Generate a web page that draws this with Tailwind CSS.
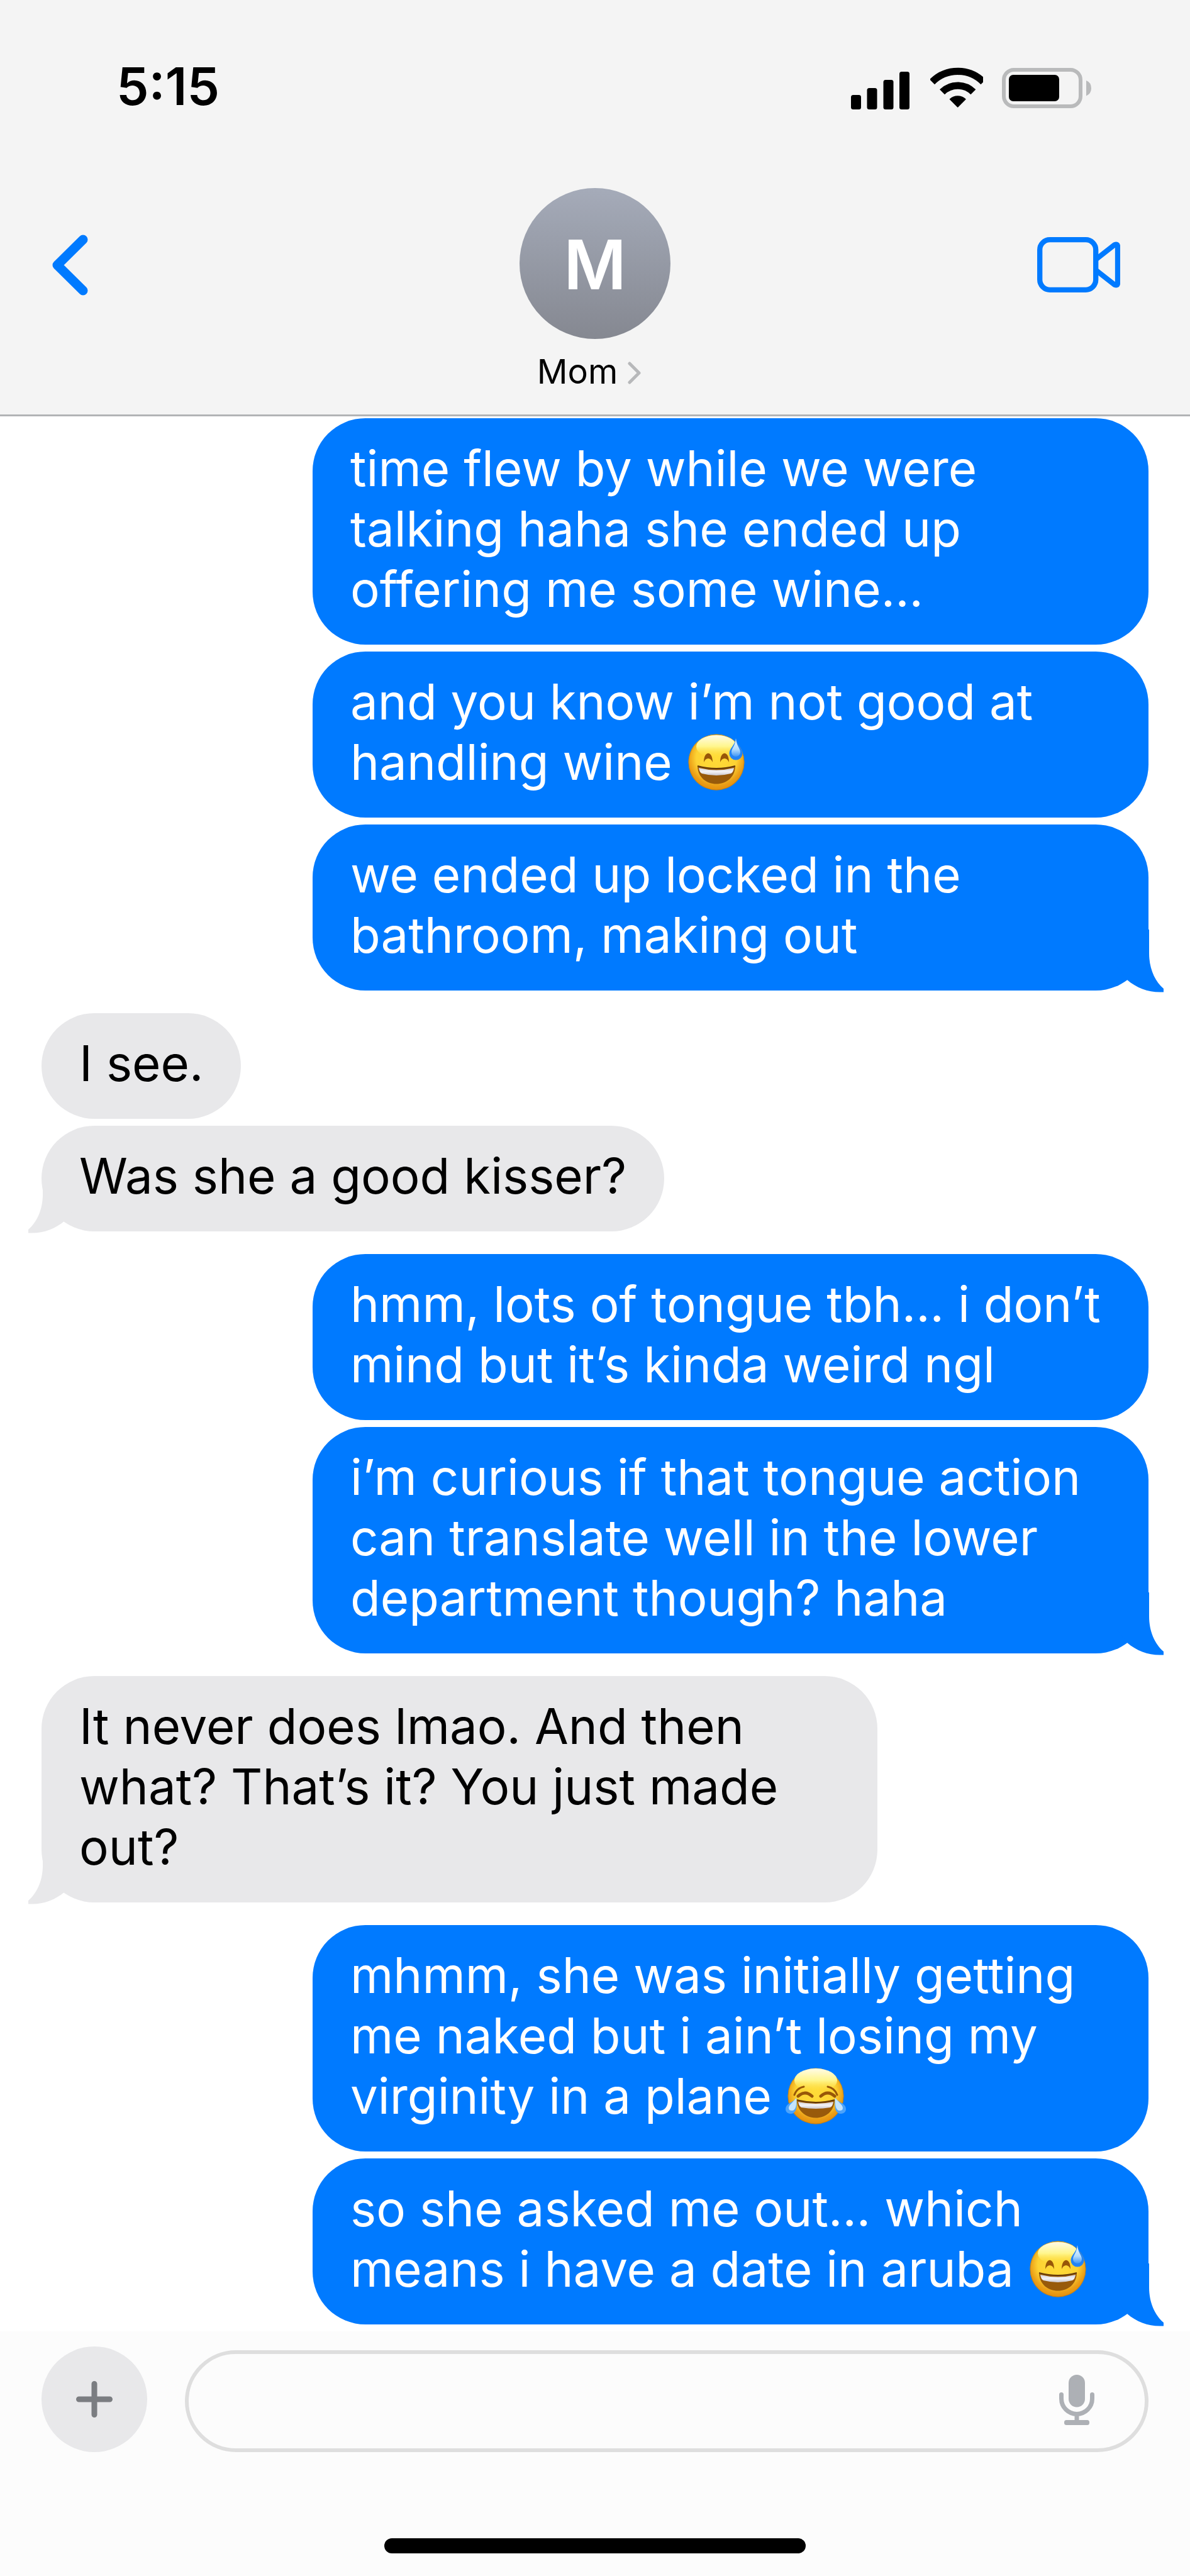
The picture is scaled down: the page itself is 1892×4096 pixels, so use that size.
<!DOCTYPE html>
<html lang="en">
<head>
  <meta charset="UTF-8" />
  <meta name="viewport" content="width=device-width, initial-scale=1.0" />
  <title>Messages</title>
  <script src="https://cdn.jsdelivr.net/npm/@tailwindcss/browser@4"></script>
</head>
<body class="bg-white text-black font-['Inter',sans-serif] flex flex-col min-h-screen">

  <!-- Shared shapes -->
  <svg class="absolute size-0" aria-hidden="true">
    <defs>
      <radialGradient id="face" cx="0.5" cy="0.42" r="0.6">
        <stop offset="0" stop-color="#ffdc38" />
        <stop offset="0.6" stop-color="#fdd233" />
        <stop offset="0.82" stop-color="#eb9f17" />
        <stop offset="1" stop-color="#e28a0c" />
      </radialGradient>
      <linearGradient id="shine" x1="0" y1="0" x2="0" y2="1">
        <stop offset="0" stop-color="#fffbe8" />
        <stop offset="0.5" stop-color="#fff68c" />
        <stop offset="1" stop-color="#ffdc38" stop-opacity="0" />
      </linearGradient>
      <linearGradient id="teeth" x1="0" y1="0" x2="0" y2="1">
        <stop offset="0" stop-color="#d4d2da" />
        <stop offset="0.5" stop-color="#f4f3f6" />
        <stop offset="1" stop-color="#c9c6cd" />
      </linearGradient>
      <linearGradient id="drop" x1="0" y1="0" x2="0" y2="1">
        <stop offset="0" stop-color="#f2faff" />
        <stop offset="0.6" stop-color="#b3dcfd" />
        <stop offset="1" stop-color="#4096f5" />
      </linearGradient>
    </defs>
    <symbol id="tail" viewBox="0 0 74 100">
      <path d="M0 0H51V38C51 62 60 82 74 94V99.5H70C50 100 31 93 16 80L0 60Z" />
    </symbol>
    <symbol id="sweat" viewBox="0 0 96 96">
      <circle cx="48" cy="48" r="44.5" fill="url(#face)" />
      <circle cx="48" cy="48" r="44" fill="none" stroke="#a8690f" stroke-opacity=".5" />
      <ellipse cx="48" cy="23" rx="32" ry="18" fill="url(#shine)" />
      <path d="M28 48C28 29 42 29 42 48C39 40 31 40 28 48ZM54 48C54 29 68 29 68 48C65 40 57 40 54 48Z" fill="#985708" />
      <path d="M18 54Q48 62 78 54C77 92 19 92 18 54Z" fill="#985a0b" />
      <path d="M20 57Q48 64 76 57Q75 64 71 66Q48 72 25 66Q21 64 20 57Z" fill="url(#teeth)" />
      <path d="M18 54Q48 62 78 54" fill="none" stroke="#63390a" stroke-width="2" />
      <path d="M79 10C81 22 89.500 26 89.500 34A10.500 10.500 0 0 1 68.500 34C68.500 26 77 22 79 10Z" fill="#2384f5" />
      <path d="M79 10C80 22 86 26 86 32A7 7 0 0 1 72 32C72 26 78 22 79 10Z" fill="url(#drop)" />
    </symbol>
    <symbol id="joy" viewBox="0 0 96 96">
      <circle cx="48" cy="48" r="44.5" fill="url(#face)" />
      <circle cx="48" cy="48" r="44" fill="none" stroke="#a8690f" stroke-opacity=".5" />
      <ellipse cx="48" cy="23" rx="34" ry="19" fill="url(#shine)" />
      <path d="M14 46Q18 35 29 33M82 46Q78 35 67 33" fill="none" stroke="#985708" stroke-width="3" stroke-linecap="round" />
      <path d="M20 48Q31 38 42 48M56 48Q67 38 78 48" fill="none" stroke="#985708" stroke-width="5" stroke-linecap="round" />
      <path d="M18 54Q48 62 78 54C77 92 19 92 18 54Z" fill="#985a0b" />
      <path d="M20 57Q48 63 76 57Q75 64 71 66Q48 70 25 66Q21 64 20 57Z" fill="url(#teeth)" />
      <path d="M18 54Q48 62 78 54" fill="none" stroke="#63390a" stroke-width="2" />
      <path d="M17 51C19 66 17 76 8 76C0 76 -2 68 2 63C6 58 13 57 17 51Z" fill="#4ca3fa" />
      <path d="M17 51C18 63 16 71 10 71C4 71 4 66 7 62Z" fill="#c4e4fe" />
      <path d="M79 51C77 66 79 76 88 76C96 76 98 68 94 63C90 58 83 57 79 51Z" fill="#4ca3fa" />
      <path d="M79 51C78 63 80 71 86 71C92 71 92 66 89 62Z" fill="#c4e4fe" />
    </symbol>
  </svg>

  <header class="bg-[#f4f4f4] border-b-3 border-[#b2b3b5] pt-24 pb-[41px]">
    <!-- Status bar -->
    <div class="flex justify-between pl-[185px] pr-[157px]">
      <time class="text-[82px] leading-[84px] font-semibold">5:15</time>
      <div class="flex items-end pb-[6px]">
        <svg class="w-[93px] h-[67px] mr-[33px]" viewBox="0 0 93 67" role="img" aria-label="Signal">
          <rect x="0" y="44" width="16" height="23" rx="3.500" />
          <rect x="25.500" y="33" width="16" height="34" rx="3.500" />
          <rect x="51.500" y="20" width="16" height="47" rx="3.500" />
          <rect x="77" y="7" width="16" height="60" rx="3.500" />
        </svg>
        <svg class="w-[84px] h-[67px] mr-[30px]" viewBox="0 -1 84 67" role="img" aria-label="Wi-Fi">
          <path d="M3 22.300A57.500 57.500 0 0 1 84.400 22.300M19 38.300A35 35 0 0 1 68.400 38.300" fill="none" stroke="#000" stroke-width="11.300" />
          <path d="M43.700 62L31.500 49.800A18 18 0 0 1 55.900 49.800Z" stroke="#000" stroke-width="1.500" stroke-linejoin="round" />
        </svg>
        <svg class="w-[142px] h-[67px]" viewBox="0 -1 142 67" role="img" aria-label="Battery">
          <rect x="3" y="3" width="122" height="58" rx="16" fill="none" stroke="#b9babb" stroke-width="6" />
          <rect x="11" y="11" width="80" height="42" rx="7" />
          <path d="M134 20Q142 23 142 32.500Q142 41 134 44.500Z" fill="#b9babb" />
        </svg>
      </div>
    </div>

    <!-- Conversation bar -->
    <nav class="grid grid-cols-3 items-center mt-[119px] pl-[82px] pr-[111px]">
      <button class="justify-self-start pt-1" aria-label="Back">
        <svg class="w-[58px] h-[97px]" viewBox="0 0 58 97" fill="none" stroke="#007aff" stroke-width="15" stroke-linecap="round" stroke-linejoin="round">
          <path d="M50 8L9 48.500L50 89" />
        </svg>
      </button>
      <div class="justify-self-center flex items-center justify-center size-60 ml-[29px] pt-1 rounded-full bg-linear-to-b from-[#a5abb9] to-[#858891] text-white text-[108px] leading-none font-semibold">M</div>
      <button class="justify-self-end pt-1" aria-label="Video call">
        <svg class="w-[132px] h-[88px]" viewBox="0 0 132 88" fill="none" stroke="#007aff" stroke-width="8.300" stroke-linejoin="round">
          <rect x="4.200" y="4.200" width="89" height="79.600" rx="16" />
          <path d="M93 35.700L123 12.300Q128 10 128 15V73Q128 78 123 75.700L93 52.300" />
        </svg>
      </button>
    </nav>
    <button class="flex items-center mx-auto mt-[25px] text-[54px] leading-[54px]">
      Mom
      <svg class="w-[40px] h-[36px] ml-4 mt-1" viewBox="0 0 40 36" fill="none" stroke="#b7b8ba" stroke-width="5" stroke-linecap="round" stroke-linejoin="round" aria-hidden="true">
        <path d="M3 3L18 18L3 33" />
      </svg>
    </button>
  </header>

  <!-- Messages -->
  <main class="grow flex flex-col gap-9 pt-[3px] px-[66px] pb-[11px] text-[78px] leading-24">
    <div class="flex flex-col items-end gap-[11px] text-white">
      <p class="max-w-[1329px] pt-8 pb-10 px-15 rounded-[84px] bg-[#007aff]">time flew by while we were talking haha she ended up offering me some wine...</p>
      <p class="max-w-[1329px] pt-8 pb-10 px-15 rounded-[84px] bg-[#007aff]">and you know i’m not good at handling wine <svg class="inline-block size-24 -my-2 align-[-12px]" role="img" aria-label="😅"><use href="#sweat" /></svg></p>
      <p class="relative max-w-[1329px] pt-8 pb-10 px-15 rounded-[84px] bg-[#007aff]">
        we ended up locked in the bathroom, making out
        <svg class="absolute -right-6 -bottom-[3px] w-[74px] h-[100px] fill-[#007aff]" aria-hidden="true"><use href="#tail" /></svg>
      </p>
    </div>

    <div class="flex flex-col items-start gap-[11px]">
      <p class="max-w-[1329px] pt-8 pb-10 px-15 rounded-[84px] bg-[#e8e8ea]">I see.</p>
      <p class="relative max-w-[1329px] pt-8 pb-10 px-15 rounded-[84px] bg-[#e8e8ea]">
        Was she a good kisser?
        <svg class="absolute -left-[21px] -bottom-[3px] w-[74px] h-[100px] fill-[#e8e8ea] -scale-x-100" aria-hidden="true"><use href="#tail" /></svg>
      </p>
    </div>

    <div class="flex flex-col items-end gap-[11px] text-white">
      <p class="max-w-[1329px] pt-8 pb-10 px-15 rounded-[84px] bg-[#007aff]">hmm, lots of tongue tbh... i don’t mind but it’s kinda weird ngl</p>
      <p class="relative max-w-[1329px] pt-8 pb-10 px-15 rounded-[84px] bg-[#007aff]">
        i’m curious if that tongue action can translate well in the lower department though? haha
        <svg class="absolute -right-6 -bottom-[3px] w-[74px] h-[100px] fill-[#007aff]" aria-hidden="true"><use href="#tail" /></svg>
      </p>
    </div>

    <div class="flex flex-col items-start gap-[11px]">
      <p class="relative max-w-[1329px] pt-8 pb-10 px-15 rounded-[84px] bg-[#e8e8ea]">
        It never does lmao. And then what? That’s it? You just made out?
        <svg class="absolute -left-[21px] -bottom-[3px] w-[74px] h-[100px] fill-[#e8e8ea] -scale-x-100" aria-hidden="true"><use href="#tail" /></svg>
      </p>
    </div>

    <div class="flex flex-col items-end gap-[11px] text-white">
      <p class="max-w-[1329px] pt-8 pb-10 px-15 rounded-[84px] bg-[#007aff]">mhmm, she was initially getting me naked but i ain’t losing my virginity in a plane <svg class="inline-block size-24 -my-2 align-[-12px]" role="img" aria-label="😂"><use href="#joy" /></svg></p>
      <p class="relative max-w-[1329px] pt-8 pb-10 px-15 rounded-[84px] bg-[#007aff]">
        so she asked me out... which means i have a date in aruba <svg class="inline-block size-24 -my-2 align-[-12px]" role="img" aria-label="😅"><use href="#sweat" /></svg>
        <svg class="absolute -right-6 -bottom-[3px] w-[74px] h-[100px] fill-[#007aff]" aria-hidden="true"><use href="#tail" /></svg>
      </p>
    </div>
  </main>

  <!-- Composer -->
  <footer class="bg-[#fcfcfc] pt-6 pb-9 px-[66px]">
    <div class="flex items-center gap-15">
      <button class="flex items-center justify-center size-42 shrink-0 rounded-full bg-[#e8e8ea]" aria-label="Add attachment">
        <svg class="size-[58px]" viewBox="0 0 58 58" fill="none" stroke="#7b7d81" stroke-width="9" stroke-linecap="round">
          <path d="M29 4.500V53.500M4.500 29H53.500" />
        </svg>
      </button>
      <div class="grow flex items-center h-[162px] mt-[6px] pr-20 border-6 border-[#dedede] rounded-full">
        <input type="text" class="grow h-full px-15 text-[78px] outline-none" aria-label="Message" />
        <button class="pb-1" aria-label="Dictate">
          <svg class="w-[56px] h-[80px]" viewBox="0 0 56 80" fill="#adb0b5">
            <rect x="15" y="0" width="26" height="51.500" rx="13" />
            <path d="M3.500 31.500V38A24.500 24.500 0 0 0 52.500 38V31.500" fill="none" stroke="#adb0b5" stroke-width="7" stroke-linecap="round" />
            <rect x="24.500" y="65" width="7" height="8" />
            <rect x="8" y="72" width="40" height="8" rx="3.500" />
          </svg>
        </button>
      </div>
    </div>
    <div class="w-[670px] h-6 mt-[137px] mx-auto rounded-full bg-black"></div>
  </footer>
</body>
</html>
